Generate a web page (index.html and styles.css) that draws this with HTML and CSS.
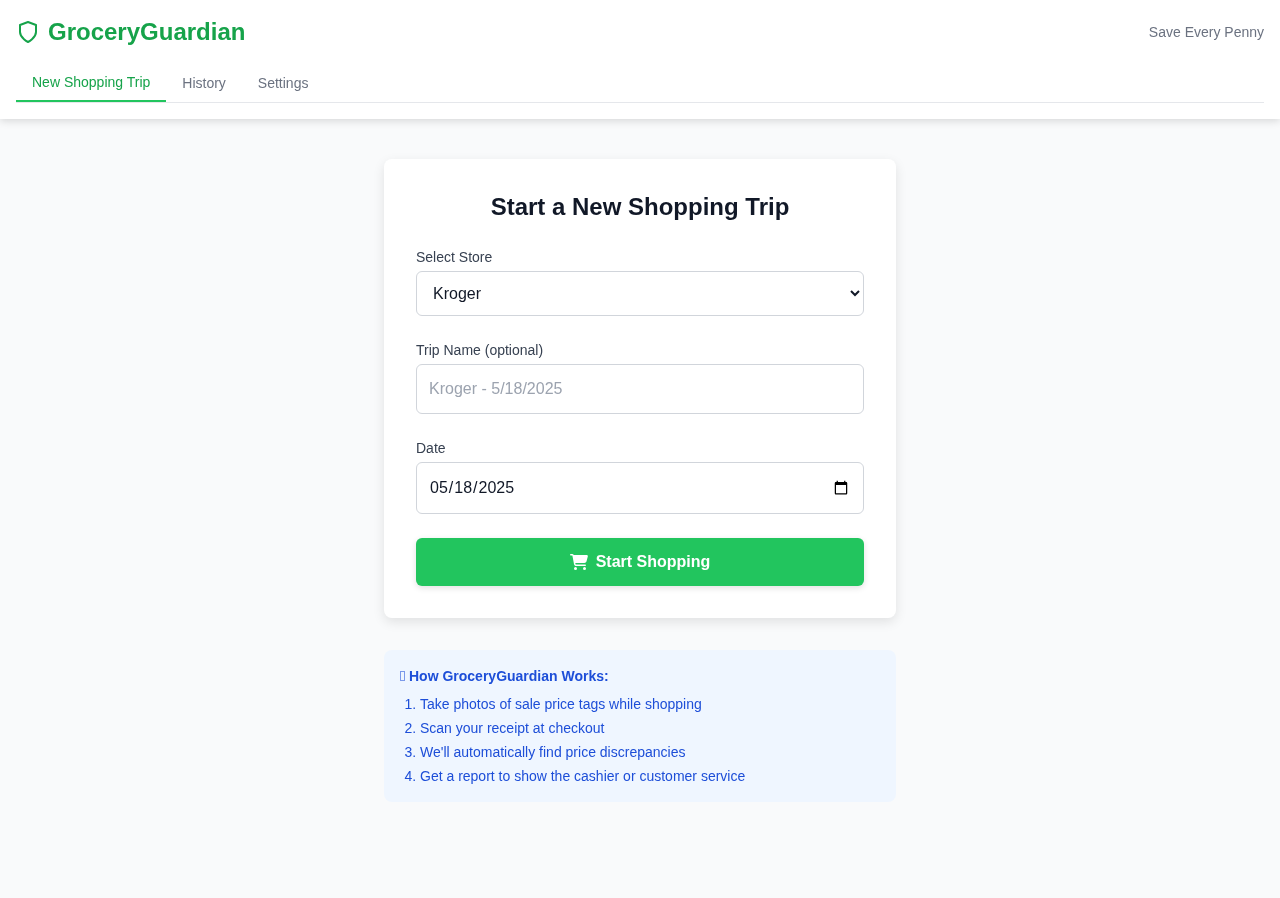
FILE: index.html
```html
<!DOCTYPE html>
<html lang="en">
<head>
<meta charset="utf-8">
<title>GroceryGuardian</title>
<link rel="stylesheet" href="styles.css">
</head>
<body>
<header class="header">
  <div class="top-row">
    <div class="brand">
      <svg class="shield" viewBox="0 0 24 24" fill="none" stroke="currentColor" stroke-width="2" stroke-linecap="round" stroke-linejoin="round"><path d="M12 22s8-4 8-10V5l-8-3-8 3v7c0 6 8 10 8 10z"/></svg>
      <h1 class="brand-name">GroceryGuardian</h1>
    </div>
    <div class="tagline">Save Every Penny</div>
  </div>
  <nav class="tabs">
    <a class="tab tab-active">New Shopping Trip</a>
    <a class="tab">History</a>
    <a class="tab">Settings</a>
  </nav>
</header>
<main class="main">
  <section class="card">
    <h2 class="card-title">Start a New Shopping Trip</h2>
    <div class="field">
      <label class="label" for="store">Select Store</label>
      <select class="control" id="store"><option>Kroger</option><option>Walmart</option><option>Target</option></select>
    </div>
    <div class="field">
      <label class="label" for="trip">Trip Name (optional)</label>
      <input class="control" id="trip" type="text" placeholder="Kroger - 5/18/2025">
    </div>
    <div class="field">
      <label class="label" for="date">Date</label>
      <input class="control control-date" id="date" type="date" value="2025-05-18">
    </div>
    <button class="start" type="button">
      <svg class="cart" viewBox="0 0 576 512" fill="currentColor"><path d="M0 24C0 10.7 10.7 0 24 0H69.5c22 0 41.5 12.8 50.6 32h411c26.3 0 45.5 25 38.6 50.4l-41 152.3c-8.5 31.4-37 53.3-69.5 53.3H170.7l5.4 28.5c2.2 11.3 12.1 19.5 23.6 19.5H488c13.3 0 24 10.7 24 24s-10.7 24-24 24H199.7c-34.6 0-64.3-24.6-70.7-58.5L77.4 54.5c-.7-3.8-4-6.5-7.9-6.5H24C10.7 48 0 37.3 0 24zM128 464a48 48 0 1 1 96 0 48 48 0 1 1 -96 0zm336-48a48 48 0 1 1 0 96 48 48 0 1 1 0-96z"/></svg>
      Start Shopping
    </button>
  </section>
  <aside class="info">
    <h3 class="info-title"><span class="tofu"></span>How GroceryGuardian Works:</h3>
    <ol class="info-list">
      <li>Take photos of sale price tags while shopping</li>
      <li>Scan your receipt at checkout</li>
      <li>We'll automatically find price discrepancies</li>
      <li>Get a report to show the cashier or customer service</li>
    </ol>
  </aside>
</main>
</body>
</html>
```
FILE: styles.css
```css
* { box-sizing: border-box; }
html, body { margin: 0; }
body {
  min-height: 898px;
  background: #f9fafb;
  color: #111827;
  font-family: "Liberation Sans", Arial, sans-serif;
  font-size: 16px;
  line-height: 24px;
}
.header {
  background: #fff;
  padding: 16px;
  box-shadow: 0 2px 8px rgba(0,0,0,.14);
  will-change: opacity;
}
.top-row {
  display: flex;
  align-items: center;
  justify-content: space-between;
  margin-bottom: 16px;
}
.brand { display: flex; align-items: center; gap: 8px; color: #16a34a; }
.shield { width: 24px; height: 24px; }
.brand-name { margin: 0; font-size: 24px; line-height: 32px; font-weight: 700; }
.tagline { font-size: 14px; line-height: 20px; color: #6b7280; }
.tabs {
  display: flex;
  align-items: center;
  border-bottom: 1px solid #e5e7eb;
}
.tab {
  padding: 8px 16px;
  font-size: 14px;
  line-height: 20px;
  color: #6b7280;
}
.tab-active {
  color: #16a34a;
  border-bottom: 2px solid #22c55e;
}
.main {
  width: 512px;
  margin: 0 auto;
  padding-top: 40px;
  display: flex;
  flex-direction: column;
  gap: 32px;
  will-change: opacity;
}
.card {
  background: #fff;
  border-radius: 8px;
  padding: 32px;
  box-shadow: 0 4px 12px rgba(0,0,0,.1);
}
.card-title {
  margin: 0 0 24px;
  font-size: 24px;
  line-height: 32px;
  font-weight: 700;
  text-align: center;
}
.field { margin-bottom: 24px; }
.label {
  display: block;
  margin-bottom: 4px;
  font-size: 14px;
  line-height: 20px;
  color: #374151;
}
.control {
  display: block;
  width: 100%;
  padding: 12px;
  border: 1px solid #d1d5db;
  border-radius: 6px;
  background: #fff;
  color: #111827;
  font-family: inherit;
  font-size: 16px;
}
input.control { line-height: 24px; }
.control::placeholder { color: #9ca3af; }
.start {
  display: flex;
  align-items: center;
  justify-content: center;
  gap: 8px;
  width: 100%;
  height: 48px;
  border: 0;
  border-radius: 6px;
  background: #22c55e;
  color: #fff;
  font-family: inherit;
  font-size: 16px;
  font-weight: 700;
  box-shadow: 0 2px 6px rgba(0,0,0,.12);
}
.cart { width: 18px; height: 16px; }
.info {
  background: #eff6ff;
  border-radius: 8px;
  padding: 16px;
  color: #1d4ed8;
  font-size: 14px;
  line-height: 20px;
}
.info-title { margin: 0 0 8px; font-size: 14px; line-height: 20px; font-weight: 700; }
.tofu {
  display: inline-block;
  width: 5px;
  height: 10px;
  margin-right: 4px;
  border: 1px solid currentColor;
  opacity: .55;
}
.info-list { margin: 0; padding-left: 20px; }
.info-list li + li { margin-top: 4px; }
```
